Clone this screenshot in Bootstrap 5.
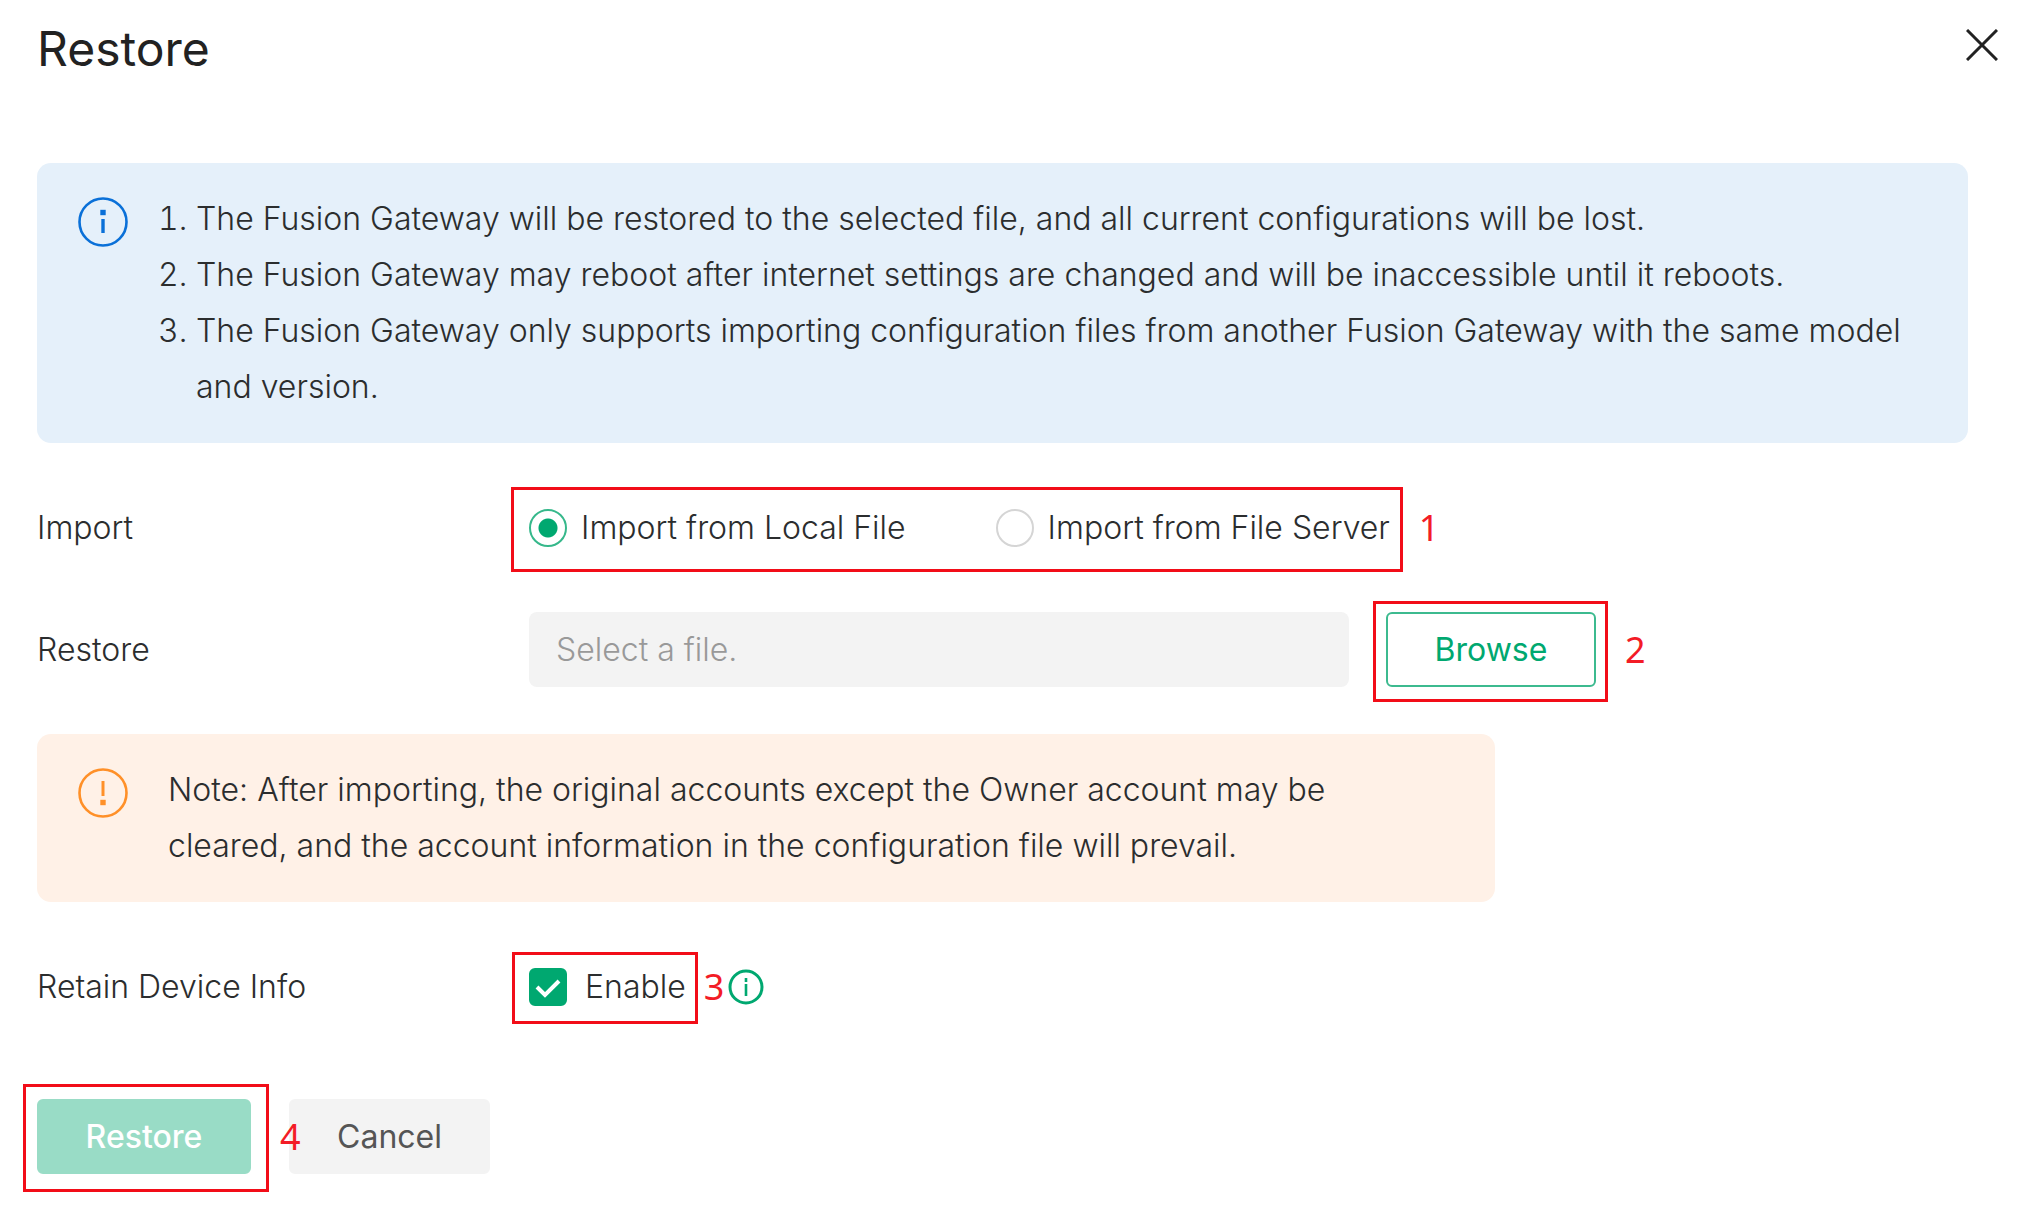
<!DOCTYPE html>
<html lang="en">
<head>
<meta charset="utf-8">
<meta name="viewport" content="width=device-width, initial-scale=1">
<title>Restore</title>
<link href="https://cdn.jsdelivr.net/npm/bootstrap@5.3.0/dist/css/bootstrap.min.css" rel="stylesheet">
<style>
  body { font-family: Inter, "Noto Sans", sans-serif; font-size: 32px; font-weight: 300; line-height: 56px; color: #2b2d2e; background: #fff; }
  .dialog-panel { padding: 0 58px 32px 37px; }
  .dialog-head { height: 163px; padding-top: 21px; }
  .dialog-title { font-size: 48px; font-weight: 400; line-height: 56px; color: #222; }
  .close-btn { margin: 8px -30px 0 0; line-height: 0; color: #222; }
  .notice { padding: 28px 40px; border-radius: 14px; }
  .notice svg { margin: 6px 0 0 1px; }
  .notice-info { background: #e5f0fa; color: #2b2d2e; }
  .notice-warn { background: #fff1e7; max-width: 1458px; padding-right: 100px; }
  .notice-info ol { margin: 0 0 0 68px; padding: 0; }
  .notice-warn p { margin: 0 0 0 40px; }
  .form-line { min-height: 75px; }
  .line-label { width: 492px; }
  .stack-gap { gap: 47px; }
  .option-gap { gap: 90px; }
  .check-text { padding-left: 14px; }
  .check-text-wide { padding-left: 18px; }
  .form-check-input { width: 38px; height: 38px; border: 2px solid #d5d5d5; }
  .form-check-input[type=radio]:checked { background: #fff radial-gradient(circle, #00a870 9px, #fff 10px); border-color: #36b88b; }
  .form-check-input[type=checkbox] { border-radius: 6px; }
  .form-check-input[type=checkbox]:checked { background-color: #00a870; border-color: #00a870; background-image: url("data:image/svg+xml,%3csvg xmlns='http://www.w3.org/2000/svg' viewBox='0 0 34 34'%3e%3cpath fill='none' stroke='%23fff' stroke-width='4' d='m6 17 8 8L28 11'/%3e%3c/svg%3e"); background-size: contain; }
  .file-field { height: 75px; max-width: 820px; border: 0; border-radius: 8px; background: #f3f3f3; font-size: 32px; font-weight: 300; padding: 0 27px; }
  .file-field::placeholder { color: #999; }
  .action-btn { height: 75px; font-size: 32px; font-weight: 400; line-height: 56px; border-radius: 6px; border-width: 2px; padding: 0; }
  .browse-wrap { margin-left: 37px; }
  .browse-btn { width: 210px; color: #00a870; border-color: #3cba8f; }
  .restore-btn, .restore-btn:disabled { width: 214px; color: #fff; background: #99dcc6; border-color: #99dcc6; opacity: 1; font-weight: 500; }
  .cancel-btn { width: 201px; color: #555; background: #f3f3f3; border-color: #f3f3f3; }
  .button-line { margin-top: 28px; gap: 38px; }
  /* red review marks drawn over the form */
  .mark-frame { position: absolute; border: 3px solid #f20d18; pointer-events: none; }
  .mark-num { position: absolute; top: 50%; left: 100%; margin-top: -28px; font: 400 36px/56px "Noto Sans", sans-serif; color: #f31c26; z-index: 1; }
  .frame-options { inset: -13px -13px -16px -18px; }
  .frame-browse { inset: -11px -12px -15px -13px; }
  .frame-enable { inset: -7px -12px -9px -17px; }
  .frame-restore { inset: -15px -18px -18px -14px; }
  .num-gap { margin-left: 29px; }
  .num-gap-near { margin-left: 18px; }
  .hint-icon { margin-left: 42px; }
</style>
<script src="https://cdn.jsdelivr.net/npm/bootstrap@5.3.0/dist/js/bootstrap.bundle.min.js"></script>
</head>
<body>
<main class="dialog-panel">
  <header class="dialog-head d-flex justify-content-between align-items-start">
    <h1 class="dialog-title m-0">Restore</h1>
    <button type="button" class="close-btn btn border-0 p-0" aria-label="Close">
      <svg width="32" height="32" viewBox="0 0 32 32" fill="none" stroke="currentColor" stroke-width="3"><path d="M1 1l30 30M31 1L1 31"/></svg>
    </button>
  </header>

  <form class="d-flex flex-column stack-gap">
    <section class="notice notice-info d-flex align-items-start">
      <svg class="flex-shrink-0" width="50" height="50" viewBox="0 0 50 50" fill="none" stroke="#0a70d8" stroke-width="2.6"><circle cx="25" cy="25" r="23.5"/><path d="M25 22v14" stroke-width="3.4"/><path d="M22.3 15.5h5.4" stroke-width="5.4"/></svg>
      <ol>
        <li>The Fusion Gateway will be restored to the selected file, and all current configurations will be lost.</li>
        <li>The Fusion Gateway may reboot after internet settings are changed and will be inaccessible until it reboots.</li>
        <li>The Fusion Gateway only supports importing configuration files from another Fusion Gateway with the same model and version.</li>
      </ol>
    </section>

    <div class="form-line d-flex align-items-center" role="radiogroup" aria-labelledby="importLabel">
      <span id="importLabel" class="line-label flex-shrink-0">Import</span>
      <div class="position-relative d-flex option-gap">
        <div class="d-flex align-items-center">
          <input class="form-check-input m-0 flex-shrink-0" type="radio" name="source" id="localFile" checked>
          <label class="check-text" for="localFile">Import from Local File</label>
        </div>
        <div class="d-flex align-items-center">
          <input class="form-check-input m-0 flex-shrink-0" type="radio" name="source" id="fileServer">
          <label class="check-text" for="fileServer">Import from File Server</label>
        </div>
        <span class="mark-frame frame-options"></span>
        <span class="mark-num num-gap">1</span>
      </div>
    </div>

    <div class="form-line d-flex align-items-center">
      <label class="line-label flex-shrink-0" for="filePath">Restore</label>
      <input class="file-field form-control" type="text" id="filePath" placeholder="Select a file.">
      <div class="browse-wrap position-relative flex-shrink-0">
        <button type="button" class="btn action-btn browse-btn d-block">Browse</button>
        <span class="mark-frame frame-browse"></span>
        <span class="mark-num num-gap">2</span>
      </div>
    </div>

    <section class="notice notice-warn d-flex align-items-start">
      <svg class="flex-shrink-0" width="50" height="50" viewBox="0 0 50 50" fill="none" stroke="#ff9028" stroke-width="2.6"><circle cx="25" cy="25" r="23.5"/><path d="M25 13v15" stroke-width="3"/><path d="M22.3 34.5h5.4" stroke-width="5.4"/></svg>
      <p>Note: After importing, the original accounts except the Owner account may be cleared, and the account information in the configuration file will prevail.</p>
    </section>

    <div class="form-line d-flex align-items-center">
      <span class="line-label flex-shrink-0">Retain Device Info</span>
      <div class="position-relative d-flex align-items-center">
        <input class="form-check-input m-0 flex-shrink-0" type="checkbox" id="retainInfo" checked>
        <label class="check-text-wide" for="retainInfo">Enable</label>
        <span class="mark-frame frame-enable"></span>
        <span class="mark-num num-gap-near">3</span>
      </div>
      <svg class="hint-icon flex-shrink-0" width="36" height="36" viewBox="0 0 36 36" fill="none" stroke="#00a870" stroke-width="3"><circle cx="18" cy="18" r="16"/><path d="M18 15v12M18 9v4" stroke-width="2.6"/></svg>
    </div>

    <div class="button-line d-flex">
      <div class="position-relative">
        <button type="submit" class="btn action-btn restore-btn d-block" disabled>Restore</button>
        <span class="mark-frame frame-restore"></span>
        <span class="mark-num num-gap">4</span>
      </div>
      <button type="button" class="btn action-btn cancel-btn">Cancel</button>
    </div>
  </form>
</main>
</body>
</html>
